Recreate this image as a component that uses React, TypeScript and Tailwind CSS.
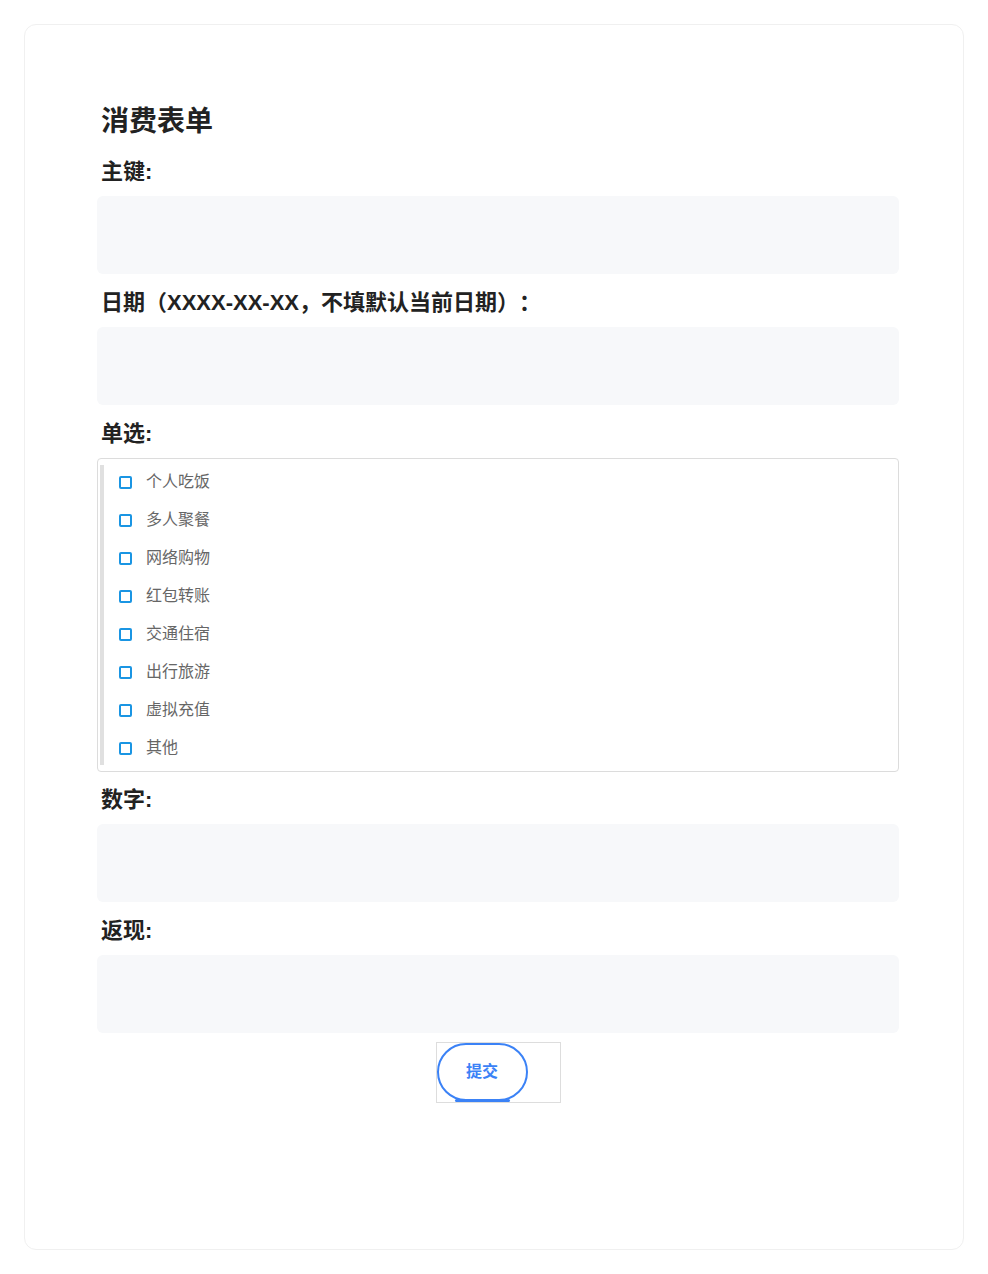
import * as React from 'react'

const options = ['个人吃饭', '多人聚餐', '网络购物', '红包转账', '交通住宿', '出行旅游', '虚拟充值', '其他']

const Label: React.FC<{ text: string }> = ({ text }) => (
  <div className="h-[30px] mb-[10px] pl-1 text-[22px] leading-[32px] font-bold text-[#222]">{text}</div>
)

const Field: React.FC<{ text: string }> = ({ text }) => (
  <div className="mb-[13px]">
    <Label text={text} />
    <input type="text" className="block w-full h-[78px] rounded-md bg-[#f7f8fa] px-3 outline-none" />
  </div>
)

export default function App() {
  const [checked, setChecked] = React.useState<string[]>([])

  const toggle = (value: string) => {
    setChecked((prev) => (prev.includes(value) ? prev.filter((v) => v !== value) : [...prev, value]))
  }

  return (
    <div className="min-h-[1274px] bg-white p-6 font-['Liberation_Sans','Noto_Sans_CJK_SC',sans-serif] [text-spacing-trim:space-all]">
      <div className="rounded-xl border border-[#f0f0f0] bg-white pt-[75px] pb-[146px] pl-[72px] pr-[64px]">
        <h1 className="h-10 mb-4 pl-1 text-[28px] leading-[44px] font-bold text-[#222]">消费表单</h1>

        <Field text="主键:" />
        <Field text="日期（XXXX-XX-XX，不填默认当前日期）：" />

        <div className="mb-3">
          <Label text="单选:" />
          <div className="rounded border border-[#dcdcdc] pt-[6px] pb-[6px] pl-[2px]">
            <div className="flex flex-col gap-2 border-l-4 border-[#e0e0e0] py-[2px] pl-[15px]">
              {options.map((opt) => (
                <label key={opt} className="flex h-[30px] items-center cursor-pointer">
                  <span
                    onClick={() => toggle(opt)}
                    className={`h-[13px] w-[13px] rounded-[2px] border-2 border-[#1a95e3] ${
                      checked.includes(opt) ? 'bg-[#1a95e3]' : 'bg-white'
                    }`}
                  />
                  <span className="ml-[14px] text-base text-[#666]">{opt}</span>
                </label>
              ))}
            </div>
          </div>
        </div>

        <Field text="数字:" />
        <div className="mb-[9px]">
          <Label text="返现:" />
          <input type="text" className="block w-full h-[78px] rounded-md bg-[#f7f8fa] px-3 outline-none" />
        </div>

        <div className="flex justify-center">
          <div className="w-[125px] h-[61px] border border-[#dddddd]">
            <div className="relative w-[91px] h-[58px]">
              <button
                type="button"
                className="h-full w-full rounded-full border-2 border-[#3b82f6] bg-white text-base font-bold text-[#3b82f6] cursor-pointer"
              >
                提交
              </button>
              <span className="absolute bottom-[-1px] left-[18px] h-[3px] w-[55px] rounded-full bg-[#3b82f6]" />
            </div>
          </div>
        </div>
      </div>
    </div>
  )
}
